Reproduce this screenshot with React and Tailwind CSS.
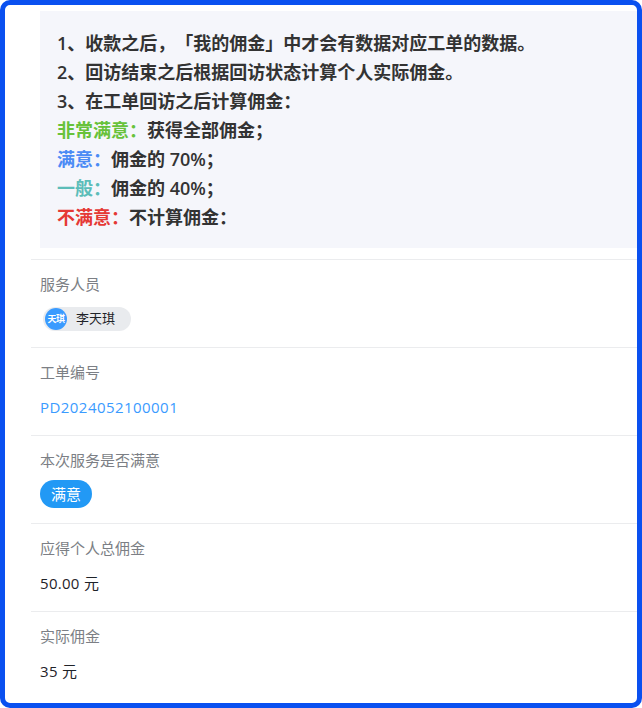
const font = "font-['Segoe_UI','Open_Sans','Noto_Sans_CJK_SC',sans-serif]";

const notes = [
  { text: '1、收款之后，「我的佣金」中才会有数据对应工单的数据。' },
  { text: '2、回访结束之后根据回访状态计算个人实际佣金。' },
  { text: '3、在工单回访之后计算佣金：' },
  { tag: '非常满意：', color: 'text-[#67c23a]', text: '获得全部佣金；' },
  { tag: '满意：', color: 'text-[#4b8bf5]', text: '佣金的 70%；' },
  { tag: '一般：', color: 'text-[#5cbdb9]', text: '佣金的 40%；' },
  { tag: '不满意：', color: 'text-[#e53935]', text: '不计算佣金：' },
];

const Row = ({ label, children }) => (
  <div className="h-[88px] border-t border-[#ebecee] pl-[9px] pt-[12px]">
    <div className="h-[24px] text-[15px] leading-[24px] text-[#7c7f85]">{label}</div>
    <div className="mt-[11px]">{children}</div>
  </div>
);

const App = () => {
  return (
    <div className={`${font} box-border h-[708px] w-[642px] overflow-hidden rounded-[10px] border-[5px] border-[#0a50f0] bg-white pt-[6px] pl-[26px] [text-spacing-trim:space-all]`}>
      <div className="mb-[11px] ml-[9px] bg-[#f5f6fb] pt-[18px] pr-[18px] pb-[16px] pl-[17px] text-[18px] leading-[29px] font-semibold text-[#333333]">
        {notes.map((n, i) => (
          <div key={i} className="whitespace-nowrap">
            {n.tag && <span className={n.color}>{n.tag}</span>}
            {n.text}
          </div>
        ))}
      </div>
      <Row label="服务人员">
        <div className="ml-[3px] flex h-[24px] w-[88px] items-center rounded-full bg-[#e9ebee] pl-[2px]">
          <div className="flex h-[22px] w-[22px] items-center justify-center rounded-full bg-[#3a9bff] text-[9px] font-semibold tracking-[-0.5px] text-white">天琪</div>
          <span className="ml-[9px] text-[13px] text-[#1f2329]">李天琪</span>
        </div>
      </Row>
      <Row label="工单编号">
        <div className="text-[15px] leading-[24px] tracking-[0.45px] text-[#3a9bff]">PD2024052100001</div>
      </Row>
      <Row label="本次服务是否满意">
        <div className="-mt-[3px] flex h-[28px] w-[52px] items-center justify-center rounded-full bg-[#2299f5] text-[15px] text-white">满意</div>
      </Row>
      <Row label="应得个人总佣金">
        <div className="text-[15px] leading-[24px] tracking-[0.3px] text-[#1f2329]">50.00 元</div>
      </Row>
      <Row label="实际佣金">
        <div className="text-[15px] leading-[24px] tracking-[0.3px] text-[#1f2329]">35 元</div>
      </Row>
    </div>
  );
};

export default App;
